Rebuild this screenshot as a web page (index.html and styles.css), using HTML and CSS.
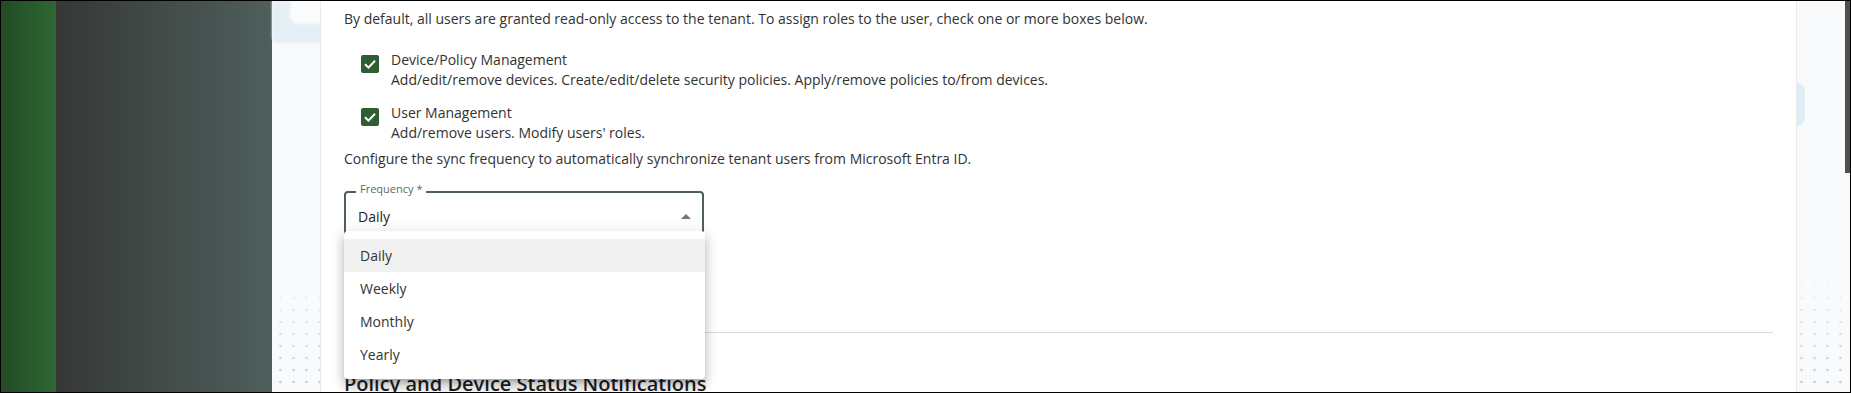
FILE: index.html
```html
<!DOCTYPE html>
<html lang="en">
<head>
  <meta charset="UTF-8">
  <title>Tenant User Sync</title>
  <link rel="stylesheet" href="styles.css">
</head>
<body>
  <div class="frame">
    <div class="rail"></div>
    <div class="sidebar"></div>
    <div class="main">
      <div class="glow-left"></div>
      <div class="glow-right"></div>
      <section class="card">
        <p class="intro">By default, all users are granted read-only access to the tenant. To assign roles to the user, check one or more boxes below.</p>

        <div class="roles">
          <div class="role">
            <span class="check">
              <svg width="18" height="18" viewBox="0 0 18 18"><polyline points="4,9.2 7.5,12.6 14,5.8" fill="none" stroke="#fff" stroke-width="2"/></svg>
            </span>
            <div class="role-text">
              <div class="role-title">Device/Policy Management</div>
              <div class="role-desc">Add/edit/remove devices. Create/edit/delete security policies. Apply/remove policies to/from devices.</div>
            </div>
          </div>
          <div class="role">
            <span class="check">
              <svg width="18" height="18" viewBox="0 0 18 18"><polyline points="4,9.2 7.5,12.6 14,5.8" fill="none" stroke="#fff" stroke-width="2"/></svg>
            </span>
            <div class="role-text">
              <div class="role-title">User Management</div>
              <div class="role-desc">Add/remove users. Modify users' roles.</div>
            </div>
          </div>
        </div>

        <p class="sync-note">Configure the sync frequency to automatically synchronize tenant users from Microsoft Entra ID.</p>

        <div class="select-field">
          <label class="select-label">Frequency *</label>
          <div class="select-value">Daily</div>
          <span class="select-arrow"></span>
          <ul class="menu">
            <li class="menu-item selected">Daily</li>
            <li class="menu-item">Weekly</li>
            <li class="menu-item">Monthly</li>
            <li class="menu-item">Yearly</li>
          </ul>
        </div>

        <hr class="divider">
        <h2 class="section-title">Policy and Device Status Notifications</h2>
      </section>
    </div>
    <div class="scrollbar"><div class="thumb"></div></div>
  </div>
</body>
</html>
```

FILE: styles.css
```css
body {
  margin: 0;
  font-family: 'Open Sans', 'Noto Sans', Arial, sans-serif;
  color: #323232;
}
.frame {
  width: 1851px;
  height: 393px;
  box-sizing: border-box;
  border: 1px solid #000;
  display: flex;
  overflow: hidden;
  background: #f8f9fa;
}
.rail {
  width: 55px;
  flex-shrink: 0;
  background: linear-gradient(90deg, #224b25, #2f6733);
}
.sidebar {
  width: 216px;
  flex-shrink: 0;
  background: linear-gradient(90deg, #353837, #4f5f5c);
}
.main {
  flex: 1;
  position: relative;
  padding: 0 48px;
  background:
    linear-gradient(180deg, #f9fafb 0, #f9fafb 265px, rgba(249, 250, 251, 0) 393px),
    radial-gradient(circle, #c6cace 1px, transparent 1.6px) 2px 3px / 13px 12px,
    #f9fafb;
}
.glow-left {
  position: absolute;
  left: 0;
  top: 0;
  width: 60px;
  height: 42px;
  background: #e4eff6;
  border-bottom-left-radius: 6px;
  filter: blur(1px);
}
.glow-left::after {
  content: '';
  position: absolute;
  left: 18px;
  top: 0;
  width: 42px;
  height: 23px;
  background: #f9fbfc;
  border-bottom-left-radius: 8px;
}
.glow-right {
  position: absolute;
  right: 40px;
  top: 82px;
  width: 40px;
  height: 43px;
  background: #dfedf5;
  border-radius: 8px;
}
.card {
  position: relative;
  z-index: 1;
  height: 100%;
  box-sizing: border-box;
  background: #fff;
  border-left: 1px solid #ebebeb;
  border-right: 1px solid #ebebeb;
  padding: 8px 23px 0 23px;
  font-size: 14px;
}
.intro, .sync-note {
  margin: 0;
  line-height: 20px;
}
.roles {
  margin-top: 20px;
  padding-left: 17px;
}
.role {
  display: flex;
  gap: 12px;
  margin-bottom: 12px;
}
.role:last-child {
  margin-bottom: 0;
}
.check {
  width: 18px;
  height: 18px;
  margin-top: 6px;
  border-radius: 2px;
  background: #2e5e32;
  flex-shrink: 0;
}
.check svg {
  display: block;
}
.role-title {
  line-height: 21px;
}
.role-desc {
  line-height: 20px;
}
.sync-note {
  margin-top: 6px;
}
.select-field {
  position: relative;
  width: 360px;
  height: 56px;
  box-sizing: border-box;
  margin-top: 22px;
  border: 2px solid #4f5f5c;
  border-radius: 4px;
  padding: 14px 12px;
}
.select-label {
  position: absolute;
  top: -11px;
  left: 10px;
  padding: 0 4px;
  background: #fff;
  font-size: 11px;
  line-height: 14px;
  color: #5b6967;
}
.select-value {
  line-height: 20px;
  color: #222;
}
.select-arrow {
  position: absolute;
  right: 11px;
  top: 21px;
  width: 0;
  height: 0;
  border-left: 5px solid transparent;
  border-right: 5px solid transparent;
  border-bottom: 5px solid #767676;
}
.menu {
  position: absolute;
  left: -2px;
  top: 38px;
  z-index: 10;
  width: 361px;
  margin: 0;
  padding: 8px 0;
  list-style: none;
  background: #fff;
  border-radius: 4px;
  box-shadow: 0 5px 5px -3px rgba(0, 0, 0, 0.2), 0 8px 10px 1px rgba(0, 0, 0, 0.14), 0 3px 14px 2px rgba(0, 0, 0, 0.12);
}
.menu-item {
  height: 33px;
  line-height: 33px;
  padding: 0 16px;
  color: #333;
}
.menu-item.selected {
  background: #f0f1f0;
}
.divider {
  margin: 85px 0 0 0;
  border: 0;
  border-top: 1px solid #dcdcdc;
}
.section-title {
  margin: 37px 0 0 0;
  font-size: 20px;
  line-height: 28px;
  font-weight: 600;
  color: #1f1f1f;
}
.scrollbar {
  width: 5px;
  flex-shrink: 0;
  background: #f9fafb;
}
.thumb {
  height: 172px;
  background: #4e4e4e;
}
```
